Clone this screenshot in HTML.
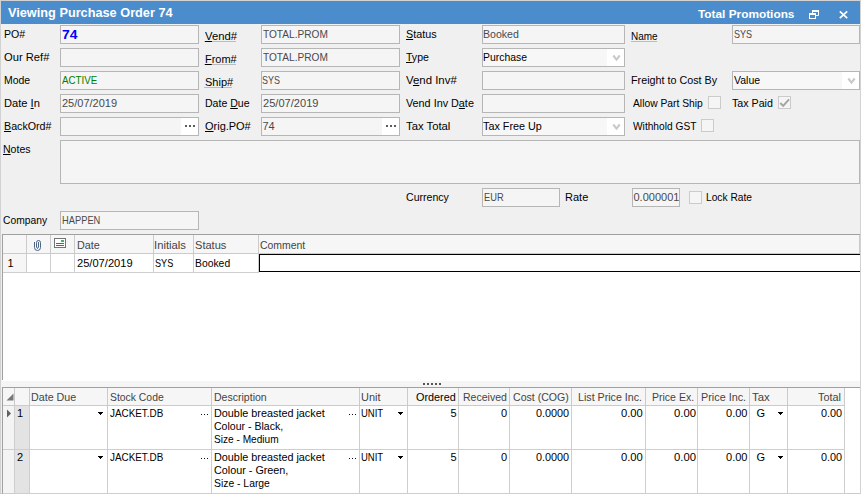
<!DOCTYPE html>
<html><head><meta charset="utf-8"><title>Viewing Purchase Order 74</title>
<style>
*{box-sizing:border-box;margin:0;padding:0}
html,body{width:861px;height:494px;overflow:hidden;background:#f0f0f0}
body{position:relative;font-family:"Liberation Sans",sans-serif;font-size:11px;color:#000}
.a{position:absolute;white-space:nowrap}
#win{left:0;top:0;width:861px;height:494px;border:1px solid #d2d2d2;border-bottom-color:#cbcbcb}
#tb{left:1px;top:1px;width:859px;height:23px;background:#4b8dcc}
.tt{color:#fff;font-weight:bold;font-size:13px;line-height:23px;top:1px}
.l{height:19px;line-height:19px}
.u{text-decoration:underline}
.f{height:19px;line-height:17px;border:1px solid #b6b6b6;background:#f5f5f5;color:#4a4a4a;padding-left:1px;overflow:hidden}
.cb{color:#000;background:#f7f7f7}
.dd{position:absolute;right:0;top:0;width:17px;height:17px;background:#fff}
.el{position:absolute;right:0;top:0;width:17px;height:17px;background:#fff}
.ck{width:13px;height:13px;border:1px solid #cbcbcb;background:#f5f5f5}
.g{background:#fff;border:1px solid #a0a0a0}
.h{position:absolute;top:0;height:18px;line-height:18px;background:#f6f6f6;border-right:1px solid #cbcbcb;border-bottom:1px solid #cbcbcb;color:#444;padding-left:2px;white-space:nowrap;overflow:hidden}
.c{position:absolute;border-right:1px solid #cecece;border-bottom:1px solid #cecece;line-height:13px;padding:1px 0 0 3px;white-space:nowrap;overflow:hidden;color:#000}
.g1 .h{line-height:20px;height:19px}
.g1 .c{padding-top:3px}
.r{text-align:right;padding-left:0;padding-right:2px}
.hr{text-align:right;padding-left:0;padding-right:3px}
.tri{position:absolute;top:6px;width:5px;height:1px;background:#000}
.tri:before{content:"";position:absolute;left:1px;top:1px;width:3px;height:1px;background:#000}
.tri:after{content:"";position:absolute;left:2px;top:2px;width:1px;height:1px;background:#000}
.d3{position:absolute;top:8px;width:9px;height:1px;background:linear-gradient(90deg,#111 0 1px,transparent 1px 3px,#111 3px 4px,transparent 4px 6px,#111 6px 7px,transparent 7px)}
.e3{position:absolute;left:4px;top:7px;width:10px;height:2px;background:linear-gradient(90deg,#5c5c5c 0 2px,transparent 2px 4px,#5c5c5c 4px 6px,transparent 6px 8px,#5c5c5c 8px 10px)}
</style></head><body>
<div class="a" id="win"></div>
<div class="a" id="tb"></div>
<div class="a tt" style="left:8px"><span id="t0" style="display:inline-block;transform-origin:0 50%;transform:scaleX(0.979);">Viewing Purchase Order 74</span></div>
<div class="a tt" style="left:698px;font-size:11px;top:3px"><span id="t1" style="display:inline-block;transform-origin:0 50%;transform:scaleX(1.076);">Total Promotions</span></div>
<svg class="a" style="left:805px;top:6px" width="50" height="16" viewBox="805 6 50 16">
<g fill="none" stroke="#fff">
<path d="M812.5 13V10.5H818.5V15.5H816" stroke-width="1"/><path d="M812 11H819" stroke-width="2"/>
<rect x="809.5" y="13.5" width="6" height="5"/><path d="M809 14H816" stroke-width="2"/>
<path d="M839.8 11.4L847.2 18.1M847.2 11.4L839.8 18.1" stroke-width="1.7"/>
</g></svg>
<div class="a l" style="left:4px;top:25px"><span id="t2" style="display:inline-block;transform-origin:0 50%;transform:scaleX(0.962);position:relative;left:-0.5px;">PO#</span></div>
<div class="a f" style="left:60px;top:25px;width:139px;color:#0000ff;font-weight:bold;font-size:13px;"><span id="t3" style="display:inline-block;transform-origin:0 50%;transform:scaleX(1.066);">74</span></div>
<div class="a l" style="left:4px;top:48px"><span id="t4" style="display:inline-block;transform-origin:0 50%;transform:scaleX(1.016);position:relative;left:-0.5px;">Our Ref#</span></div>
<div class="a f" style="left:60px;top:48px;width:139px;"></div>
<div class="a l" style="left:4px;top:71px"><span id="t5" style="display:inline-block;transform-origin:0 50%;transform:scaleX(0.951);position:relative;left:-0.5px;">Mode</span></div>
<div class="a f" style="left:60px;top:71px;width:139px;color:#008000;"><span id="t6" style="display:inline-block;transform-origin:0 50%;transform:scaleX(0.889);position:relative;left:-0.5px;">ACTIVE</span></div>
<div class="a l" style="left:4px;top:94px"><span id="t7" style="display:inline-block;transform-origin:0 50%;transform:scaleX(1.011);position:relative;left:-0.5px;">Date <span class="u">I</span>n</span></div>
<div class="a f" style="left:60px;top:94px;width:139px;"><span id="t8">25/07/2019</span></div>
<div class="a l" style="left:4px;top:117px"><span id="t9" style="display:inline-block;transform-origin:0 50%;transform:scaleX(0.971);position:relative;left:-0.5px;"><span class="u">B</span>ackOrd#</span></div>
<div class="a f" style="left:60px;top:117px;width:139px;"><div class="el"><i class="e3"></i></div></div>
<div class="a l" style="left:4px;top:140px"><span id="t10" style="display:inline-block;transform-origin:0 50%;transform:scaleX(0.958);position:relative;left:-1.0px;"><span class="u">N</span>otes</span></div>
<div class="a f" style="left:60px;top:140px;width:800px;height:44px;"></div>
<div class="a l" style="left:4px;top:211px"><span id="t11" style="display:inline-block;transform-origin:0 50%;transform:scaleX(0.935);position:relative;left:-1.0px;">Company</span></div>
<div class="a f" style="left:60px;top:211px;width:139px;"><span id="t12" style="display:inline-block;transform-origin:0 50%;transform:scaleX(0.848);">HAPPEN</span></div>
<div class="a" style="left:204px;top:41px;width:32px;height:1px;background:#bcbcbc"></div>
<div class="a l" style="left:204px;top:27px"><span id="t13" style="display:inline-block;transform-origin:0 50%;transform:scaleX(1.024);position:relative;left:0.5px;"><span class="u">V</span>end#</span></div>
<div class="a f" style="left:261px;top:25px;width:139px;"><span id="t14" style="display:inline-block;transform-origin:0 50%;transform:scaleX(0.920);position:relative;left:-0.5px;">TOTAL.PROM</span></div>
<div class="a" style="left:204px;top:64px;width:32px;height:1px;background:#bcbcbc"></div>
<div class="a l" style="left:204px;top:50px"><span id="t15" style="display:inline-block;transform-origin:0 50%;transform:scaleX(0.996);position:relative;left:0.5px;"><span class="u">F</span>rom#</span></div>
<div class="a f" style="left:261px;top:48px;width:139px;"><span id="t16" style="display:inline-block;transform-origin:0 50%;transform:scaleX(0.920);position:relative;left:-0.5px;">TOTAL.PROM</span></div>
<div class="a" style="left:204px;top:87px;width:28px;height:1px;background:#bcbcbc"></div>
<div class="a l" style="left:204px;top:73px"><span id="t17" style="display:inline-block;transform-origin:0 50%;transform:scaleX(1.001);position:relative;left:0.5px;">Ship#</span></div>
<div class="a f" style="left:261px;top:71px;width:139px;"><span id="t18" style="display:inline-block;transform-origin:0 50%;transform:scaleX(0.814);position:relative;left:-1.0px;">SYS</span></div>
<div class="a l" style="left:204px;top:94px"><span id="t19" style="display:inline-block;transform-origin:0 50%;transform:scaleX(0.958);position:relative;left:0.5px;">Date <span class="u">D</span>ue</span></div>
<div class="a f" style="left:261px;top:94px;width:139px;"><span id="t20" style="display:inline-block;transform-origin:0 50%;transform:scaleX(1.008);position:relative;left:-0.5px;">25/07/2019</span></div>
<div class="a l" style="left:204px;top:117px"><span id="t21" style="display:inline-block;transform-origin:0 50%;transform:scaleX(0.997);position:relative;left:0.5px;"><span class="u">O</span>rig.PO#</span></div>
<div class="a f" style="left:261px;top:117px;width:139px;"><span id="t22" style="position:relative;left:-0.5px;">74</span><div class="el"><i class="e3"></i></div></div>
<div class="a l" style="left:405px;top:25px"><span id="t23" style="display:inline-block;transform-origin:0 50%;transform:scaleX(0.978);position:relative;left:1.0px;"><span class="u">S</span>tatus</span></div>
<div class="a f" style="left:482px;top:25px;width:143px;"><span id="t24" style="display:inline-block;transform-origin:0 50%;transform:scaleX(0.962);position:relative;left:-1.5px;">Booked</span></div>
<div class="a l" style="left:405px;top:48px"><span id="t25" style="display:inline-block;transform-origin:0 50%;transform:scaleX(0.958);position:relative;left:1.0px;"><span class="u">T</span>ype</span></div>
<div class="a f cb" style="left:482px;top:48px;width:143px;"><span id="t26" style="display:inline-block;transform-origin:0 50%;transform:scaleX(0.946);position:relative;left:-1.5px;">Purchase</span><div class="dd"><svg width="17" height="17" style="position:absolute;left:0;top:0"><path d="M6.3 6.5L9.5 10.6L12.7 6.5" fill="none" stroke="#c9c9c9" stroke-width="2.1"/></svg></div></div>
<div class="a l" style="left:405px;top:71px"><span id="t27" style="display:inline-block;transform-origin:0 50%;transform:scaleX(1.037);position:relative;left:1.0px;">V<span class="u">e</span>nd Inv#</span></div>
<div class="a f" style="left:482px;top:71px;width:143px;"></div>
<div class="a l" style="left:405px;top:94px"><span id="t28" style="display:inline-block;transform-origin:0 50%;transform:scaleX(0.982);position:relative;left:1.0px;">Vend Inv D<span class="u">a</span>te</span></div>
<div class="a f" style="left:482px;top:94px;width:143px;"></div>
<div class="a l" style="left:405px;top:117px"><span id="t29" style="display:inline-block;transform-origin:0 50%;transform:scaleX(1.026);position:relative;left:1.0px;">Tax Total</span></div>
<div class="a f cb" style="left:482px;top:117px;width:143px;"><span id="t30" style="display:inline-block;transform-origin:0 50%;transform:scaleX(0.982);position:relative;left:-1.5px;">Tax Free Up</span><div class="dd"><svg width="17" height="17" style="position:absolute;left:0;top:0"><path d="M6.3 6.5L9.5 10.6L12.7 6.5" fill="none" stroke="#c9c9c9" stroke-width="2.1"/></svg></div></div>
<div class="a l" style="left:405px;top:188px"><span id="t31" style="display:inline-block;transform-origin:0 50%;transform:scaleX(0.960);position:relative;left:1.0px;">Currency</span></div>
<div class="a f" style="left:482px;top:188px;width:78px;"><span id="t32" style="display:inline-block;transform-origin:0 50%;transform:scaleX(0.846);position:relative;left:-0.5px;">EUR</span></div>
<div class="a l" style="left:565px;top:188px"><span id="t33" style="display:inline-block;transform-origin:0 50%;transform:scaleX(1.002);">Rate</span></div>
<div class="a f" style="left:632px;top:188px;width:48px;"><span id="t34" style="position:relative;left:-0.5px;">0.000001</span></div>
<div class="a ck" style="left:689px;top:191px"></div>
<div class="a l" style="left:705px;top:188px"><span id="t35" style="display:inline-block;transform-origin:0 50%;transform:scaleX(0.928);position:relative;left:0.5px;">Lock Rate</span></div>
<div class="a" style="left:631px;top:41px;width:26px;height:1px;background:#bcbcbc"></div>
<div class="a l" style="left:631px;top:27px"><span id="t36" style="display:inline-block;transform-origin:0 50%;transform:scaleX(0.906);position:relative;left:-0.5px;">Name</span></div>
<div class="a f" style="left:732px;top:25px;width:128px;"><span id="t37" style="display:inline-block;transform-origin:0 50%;transform:scaleX(0.822);position:relative;left:-0.5px;">SYS</span></div>
<div class="a l" style="left:630px;top:71px"><span id="t38" style="display:inline-block;transform-origin:0 50%;transform:scaleX(0.978);position:relative;left:0.5px;">Freight to Cost By</span></div>
<div class="a f cb" style="left:732px;top:71px;width:128px;"><span id="t39" style="display:inline-block;transform-origin:0 50%;transform:scaleX(0.954);position:relative;left:-0.5px;">Value</span><div class="dd"><svg width="17" height="17" style="position:absolute;left:0;top:0"><path d="M6.3 6.5L9.5 10.6L12.7 6.5" fill="none" stroke="#c9c9c9" stroke-width="2.1"/></svg></div></div>
<div class="a l" style="left:633px;top:94px"><span id="t40" style="display:inline-block;transform-origin:0 50%;transform:scaleX(0.935);position:relative;left:-0.5px;">Allow Part Ship</span></div>
<div class="a ck" style="left:708px;top:96px"></div>
<div class="a l" style="left:732px;top:94px"><span id="t41" style="display:inline-block;transform-origin:0 50%;transform:scaleX(0.970);">Tax Paid</span></div>
<div class="a ck" style="left:778px;top:96px"><svg width="11" height="11" style="position:absolute;left:0;top:0"><path d="M1.3 6L4.2 8.9L10 2.3" fill="none" stroke="#a4a4a4" stroke-width="2"/></svg></div>
<div class="a l" style="left:633px;top:117px"><span id="t42" style="display:inline-block;transform-origin:0 50%;transform:scaleX(0.926);position:relative;left:-0.5px;">Withhold GST</span></div>
<div class="a ck" style="left:701px;top:119px"></div>
<div class="a g g1" style="left:2px;top:234px;width:858px;height:146px;border-right:none;border-bottom:none">
<div class="h" style="left:0px;width:24px;"></div>
<div class="h" style="left:24px;width:24px;"><svg width="23" height="17" viewBox="27 235 23 17" style="position:absolute;left:0;top:0"><path d="M34.5 242V247.5Q34.5 250.5 37.5 250.5Q40.5 250.5 40.5 247.5V242.5Q40.5 240.5 38.5 240.5Q36.5 240.5 36.5 242.5V247L37.5 248.5L38.5 247V242" fill="none" stroke="#3a5578" stroke-width="0.9"/></svg></div>
<div class="h" style="left:48px;width:24px;"><svg width="23" height="17" viewBox="51 235 23 17" style="position:absolute;left:0;top:0"><rect x="54.5" y="238.5" width="11" height="9" fill="#fff" stroke="#747474"/><rect x="61" y="240" width="3" height="2" fill="#3cb371"/><rect x="56" y="243" width="8" height="1" fill="#2e6db4"/><rect x="56" y="245" width="8" height="1" fill="#2e6db4"/></svg></div>
<div class="h" style="left:72px;width:79px;"><span id="t43" style="display:inline-block;transform-origin:0 50%;transform:scaleX(0.979);position:relative;left:-0.5px;">Date</span></div>
<div class="h" style="left:151px;width:40px;"><span id="t44" style="display:inline-block;transform-origin:0 50%;transform:scaleX(1.024);position:relative;left:-2.0px;">Initials</span></div>
<div class="h" style="left:191px;width:65px;"><span id="t45" style="display:inline-block;transform-origin:0 50%;transform:scaleX(1.006);position:relative;left:-1.5px;">Status</span></div>
<div class="h" style="left:256px;width:601px;"><span id="t46" style="display:inline-block;transform-origin:0 50%;transform:scaleX(0.948);position:relative;left:-1.5px;">Comment</span></div>
<div class="c" style="left:0px;top:19px;width:24px;height:19px;background:#f6f6f6;padding-left:5px;"><span id="t47" style="position:relative;left:-0.5px;">1</span></div>
<div class="c" style="left:24px;top:19px;width:24px;height:19px;"></div>
<div class="c" style="left:48px;top:19px;width:24px;height:19px;"></div>
<div class="c" style="left:72px;top:19px;width:79px;height:19px;"><span id="t48" style="display:inline-block;transform-origin:0 50%;transform:scaleX(1.010);position:relative;left:-1.0px;">25/07/2019</span></div>
<div class="c" style="left:151px;top:19px;width:40px;height:19px;"><span id="t49" style="display:inline-block;transform-origin:0 50%;transform:scaleX(0.829);position:relative;left:-2.0px;">SYS</span></div>
<div class="c" style="left:191px;top:19px;width:65px;height:19px;"><span id="t50" style="display:inline-block;transform-origin:0 50%;transform:scaleX(0.942);position:relative;left:-2.5px;">Booked</span></div>
<div class="c" style="left:256px;top:19px;width:601px;height:18px;border:1px solid #000;border-right:none;"></div>
</div>
<div class="a" style="left:2px;top:380px;width:858px;height:1px;background:#fff"></div>
<div class="a" style="left:1px;top:381px;width:859px;height:6px;background:#f5f5f5"></div>
<div class="a" style="left:423px;top:383px;width:18px;height:2px;background:linear-gradient(90deg,#555 0 2px,transparent 2px 4px,#555 4px 6px,transparent 6px 8px,#555 8px 10px,transparent 10px 12px,#555 12px 14px,transparent 14px 16px,#555 16px 18px)"></div>
<div class="a g" style="left:2px;top:387px;width:858px;height:107px;border-right:none;border-bottom-color:#cbcbcb">
<div class="h" style="left:0px;width:12px;"></div>
<div class="h" style="left:12px;width:15px;"></div>
<div class="h" style="left:27px;width:78px;"><span id="t51" style="display:inline-block;transform-origin:0 50%;transform:scaleX(0.973);position:relative;left:-1.5px;">Date Due</span></div>
<div class="h" style="left:105px;width:104px;"><span id="t52" style="display:inline-block;transform-origin:0 50%;transform:scaleX(0.944);">Stock Code</span></div>
<div class="h" style="left:209px;width:148px;"><span id="t53" style="display:inline-block;transform-origin:0 50%;transform:scaleX(0.958);position:relative;left:-0.5px;">Description</span></div>
<div class="h" style="left:357px;width:48px;"><span id="t54" style="display:inline-block;transform-origin:0 50%;transform:scaleX(0.995);position:relative;left:-1.5px;">Unit</span></div>
<div class="h hr" style="left:405px;width:51px;color:#000;"><span id="t55" style="display:inline-block;transform-origin:0 50%;transform:scaleX(0.983);position:relative;left:1.5px;">Ordered</span></div>
<div class="h hr" style="left:456px;width:51px;"><span id="t56" style="display:inline-block;transform-origin:0 50%;transform:scaleX(0.957);position:relative;left:2.5px;">Received</span></div>
<div class="h hr" style="left:507px;width:62px;"><span id="t57" style="display:inline-block;transform-origin:0 50%;transform:scaleX(0.960);position:relative;left:2.5px;">Cost (COG)</span></div>
<div class="h hr" style="left:569px;width:74px;"><span id="t58" style="display:inline-block;transform-origin:0 50%;transform:scaleX(0.970);position:relative;left:2.5px;">List Price Inc.</span></div>
<div class="h hr" style="left:643px;width:52px;"><span id="t59" style="display:inline-block;transform-origin:0 50%;transform:scaleX(0.956);position:relative;left:2.5px;">Price Ex.</span></div>
<div class="h hr" style="left:695px;width:52px;"><span id="t60" style="display:inline-block;transform-origin:0 50%;transform:scaleX(0.984);position:relative;left:1.0px;">Price Inc.</span></div>
<div class="h" style="left:747px;width:38px;"><span id="t61" style="display:inline-block;transform-origin:0 50%;transform:scaleX(1.036);">Tax</span></div>
<div class="h hr" style="left:785px;width:57px;"><span id="t62" style="display:inline-block;transform-origin:0 50%;transform:scaleX(0.986);position:relative;left:0.5px;">Total</span></div>
<div class="c" style="left:0px;top:18px;width:12px;height:44px;background:#f4f4f4;"></div>
<div class="c" style="left:12px;top:18px;width:15px;height:44px;background:#e3e3e3;padding-left:3px;"><span id="t63" style="position:relative;left:-1.0px;">1</span></div>
<div class="c" style="left:27px;top:18px;width:78px;height:44px;"><i class="tri" style="left:68px"></i></div>
<div class="c" style="left:105px;top:18px;width:104px;height:44px;"><span id="t64" style="display:inline-block;transform-origin:0 50%;transform:scaleX(0.899);position:relative;left:-1.5px;">JACKET.DB</span><i class="d3" style="left:93px"></i></div>
<div class="c" style="left:209px;top:18px;width:148px;height:44px"><span id="t65" style="display:inline-block;transform-origin:0 50%;transform:scaleX(0.984);position:relative;left:-1.0px;">Double breasted jacket</span><br><span id="t66" style="display:inline-block;transform-origin:0 50%;transform:scaleX(0.958);position:relative;left:-1.5px;">Colour - Black,</span><br><span id="t67" style="display:inline-block;transform-origin:0 50%;transform:scaleX(0.920);position:relative;left:-1.5px;">Size - Medium</span><i class="d3" style="left:137px"></i></div>
<div class="c" style="left:357px;top:18px;width:48px;height:44px;"><span id="t68" style="display:inline-block;transform-origin:0 50%;transform:scaleX(0.864);position:relative;left:-2.5px;">UNIT</span><i class="tri" style="left:38px"></i></div>
<div class="c r" style="left:405px;top:18px;width:51px;height:44px;"><span id="t69" style="position:relative;left:0.5px;">5</span></div>
<div class="c r" style="left:456px;top:18px;width:51px;height:44px;"><span id="t70">0</span></div>
<div class="c r" style="left:507px;top:18px;width:62px;height:44px;"><span id="t71" style="display:inline-block;transform-origin:0 50%;transform:scaleX(0.985);position:relative;left:1.0px;">0.0000</span></div>
<div class="c r" style="left:569px;top:18px;width:74px;height:44px;"><span id="t72" style="display:inline-block;transform-origin:0 50%;transform:scaleX(1.020);position:relative;left:-1.0px;">0.00</span></div>
<div class="c r" style="left:643px;top:18px;width:52px;height:44px;"><span id="t73" style="display:inline-block;transform-origin:0 50%;transform:scaleX(1.027);position:relative;left:0.5px;">0.00</span></div>
<div class="c r" style="left:695px;top:18px;width:52px;height:44px;"><span id="t74" style="display:inline-block;transform-origin:0 50%;transform:scaleX(1.003);position:relative;left:0.5px;">0.00</span></div>
<div class="c" style="left:747px;top:18px;width:38px;height:44px;padding-left:8px;"><span id="t75" style="position:relative;left:-1.5px;">G</span><i class="tri" style="left:28px"></i></div>
<div class="c r" style="left:785px;top:18px;width:57px;height:44px;"><span id="t76" style="display:inline-block;transform-origin:0 50%;transform:scaleX(0.986);">0.00</span></div>
<div class="c" style="left:0px;top:62px;width:12px;height:44px;background:#f4f4f4;"></div>
<div class="c" style="left:12px;top:62px;width:15px;height:44px;background:#e3e3e3;padding-left:3px;"><span id="t77" style="position:relative;left:-1.0px;">2</span></div>
<div class="c" style="left:27px;top:62px;width:78px;height:44px;"><i class="tri" style="left:68px"></i></div>
<div class="c" style="left:105px;top:62px;width:104px;height:44px;"><span id="t78" style="display:inline-block;transform-origin:0 50%;transform:scaleX(0.899);position:relative;left:-1.5px;">JACKET.DB</span><i class="d3" style="left:93px"></i></div>
<div class="c" style="left:209px;top:62px;width:148px;height:44px"><span id="t79" style="display:inline-block;transform-origin:0 50%;transform:scaleX(0.984);position:relative;left:-1.0px;">Double breasted jacket</span><br><span id="t80" style="display:inline-block;transform-origin:0 50%;transform:scaleX(0.981);position:relative;left:-1.5px;">Colour - Green,</span><br><span id="t81" style="display:inline-block;transform-origin:0 50%;transform:scaleX(0.942);position:relative;left:-1.5px;">Size - Large</span><i class="d3" style="left:137px"></i></div>
<div class="c" style="left:357px;top:62px;width:48px;height:44px;"><span id="t82" style="display:inline-block;transform-origin:0 50%;transform:scaleX(0.864);position:relative;left:-2.5px;">UNIT</span><i class="tri" style="left:38px"></i></div>
<div class="c r" style="left:405px;top:62px;width:51px;height:44px;"><span id="t83" style="position:relative;left:0.5px;">5</span></div>
<div class="c r" style="left:456px;top:62px;width:51px;height:44px;"><span id="t84">0</span></div>
<div class="c r" style="left:507px;top:62px;width:62px;height:44px;"><span id="t85" style="display:inline-block;transform-origin:0 50%;transform:scaleX(0.985);position:relative;left:1.0px;">0.0000</span></div>
<div class="c r" style="left:569px;top:62px;width:74px;height:44px;"><span id="t86" style="display:inline-block;transform-origin:0 50%;transform:scaleX(1.020);position:relative;left:-1.0px;">0.00</span></div>
<div class="c r" style="left:643px;top:62px;width:52px;height:44px;"><span id="t87" style="display:inline-block;transform-origin:0 50%;transform:scaleX(1.027);position:relative;left:0.5px;">0.00</span></div>
<div class="c r" style="left:695px;top:62px;width:52px;height:44px;"><span id="t88" style="display:inline-block;transform-origin:0 50%;transform:scaleX(1.003);position:relative;left:0.5px;">0.00</span></div>
<div class="c" style="left:747px;top:62px;width:38px;height:44px;padding-left:8px;"><span id="t89" style="position:relative;left:-1.5px;">G</span><i class="tri" style="left:28px"></i></div>
<div class="c r" style="left:785px;top:62px;width:57px;height:44px;"><span id="t90" style="display:inline-block;transform-origin:0 50%;transform:scaleX(0.986);">0.00</span></div>
<svg style="position:absolute;left:0;top:0" width="14" height="40" viewBox="3 388 14 40"><path d="M13.5 393.5V400.5H6.5Z" fill="#787878"/><path d="M7 409.5L11 413.5L7 417.5Z" fill="#606060"/></svg>
</div>
</body></html>
